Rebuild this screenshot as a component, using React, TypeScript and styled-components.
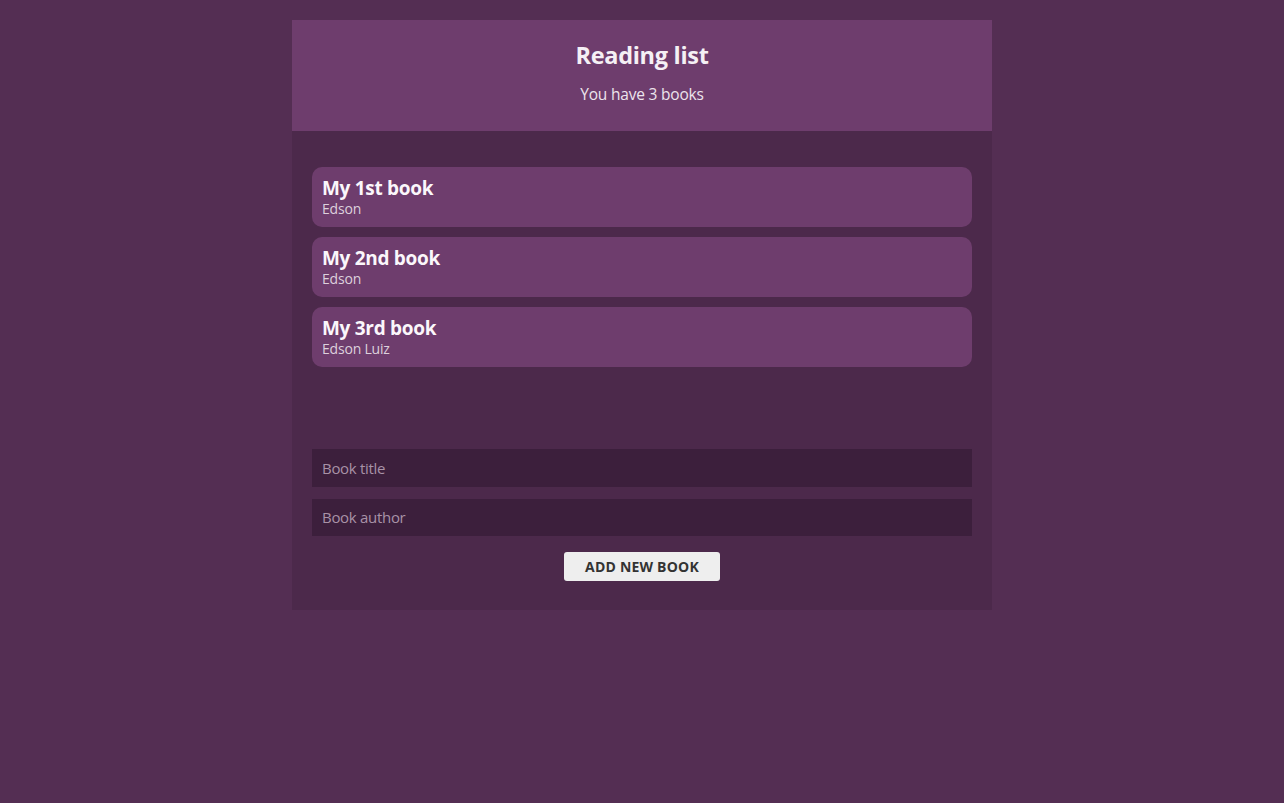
import React from "react";
import styled, { createGlobalStyle } from "styled-components";

const Global = createGlobalStyle`
  html, body { margin: 0; padding: 0; background: #542e53; }
  body { font-family: "Open Sans", "Noto Sans", sans-serif; color: #f3eef3; }
  * { box-sizing: border-box; }
`;

const Page = styled.div`
  display: flex;
  justify-content: center;
  padding-top: 20px;
  min-height: 803px;
`;

const Container = styled.div`
  width: 700px;
  display: flex;
  flex-direction: column;
  align-self: flex-start;
`;

const Header = styled.header`
  height: 111px;
  background: #6e3d6d;
  display: flex;
  flex-direction: column;
  align-items: center;
  padding-top: 19px;
`;

const Title = styled.h1`
  margin: 0;
  font-size: 23.5px;
  line-height: 32px;
  font-weight: 700;
  color: #f5f0f5;
  letter-spacing: -0.3px;
`;

const Subtitle = styled.p`
  margin: 13px 0 0;
  font-size: 15.5px;
  line-height: 20px;
  color: #ece4ec;
  letter-spacing: -0.2px;
`;

const Main = styled.main`
  background: #4c294b;
  padding: 36px 20px 29px;
  display: flex;
  flex-direction: column;
`;

const List = styled.ul`
  list-style: none;
  margin: 0;
  padding: 0;
  display: flex;
  flex-direction: column;
  gap: 10px;
`;

const Card = styled.li`
  height: 60px;
  background: #6e3d6d;
  border-radius: 10px;
  padding: 9px 10px;
  display: flex;
  flex-direction: column;
`;

const BookTitle = styled.span`
  font-size: 19px;
  line-height: 24px;
  font-weight: 700;
  color: #fbf7fb;
  letter-spacing: -0.3px;
`;

const BookAuthor = styled.span`
  font-size: 14px;
  line-height: 18px;
  color: #ddd0dc;
  letter-spacing: -0.2px;
`;

const Form = styled.form`
  margin-top: 82px;
  display: flex;
  flex-direction: column;
  align-items: center;
`;

const Input = styled.input<{ $gap?: number }>`
  width: 100%;
  height: 37.5px;
  border: none;
  outline: none;
  background: #3c1f3c;
  color: #f0e8f0;
  padding: 0 10px;
  font-family: "Open Sans", "Noto Sans", sans-serif;
  font-size: 15px;
  margin-bottom: ${(p) => p.$gap ?? 0}px;
  &::placeholder { color: #a892a7; letter-spacing: -0.3px; }
`;

const Button = styled.button`
  width: 156px;
  height: 29px;
  border: none;
  border-radius: 3px;
  background: #eeeeee;
  color: #333333;
  font-family: "Open Sans", "Noto Sans", sans-serif;
  font-weight: 700;
  font-size: 14px;
  letter-spacing: 0.2px;
  cursor: pointer;
`;

const books = [
  { title: "My 1st book", author: "Edson" },
  { title: "My 2nd book", author: "Edson" },
  { title: "My 3rd book", author: "Edson Luiz" },
];

export default function App() {
  return (
    <>
      <Global />
      <Page>
        <Container>
          <Header>
            <Title>Reading list</Title>
            <Subtitle>You have {books.length} books</Subtitle>
          </Header>
          <Main>
            <List>
              {books.map((b) => (
                <Card key={b.title}>
                  <BookTitle>{b.title}</BookTitle>
                  <BookAuthor>{b.author}</BookAuthor>
                </Card>
              ))}
            </List>
            <Form onSubmit={(e) => e.preventDefault()}>
              <Input placeholder="Book title" $gap={12} />
              <Input placeholder="Book author" $gap={16} />
              <Button type="submit">ADD NEW BOOK</Button>
            </Form>
          </Main>
        </Container>
      </Page>
    </>
  );
}
